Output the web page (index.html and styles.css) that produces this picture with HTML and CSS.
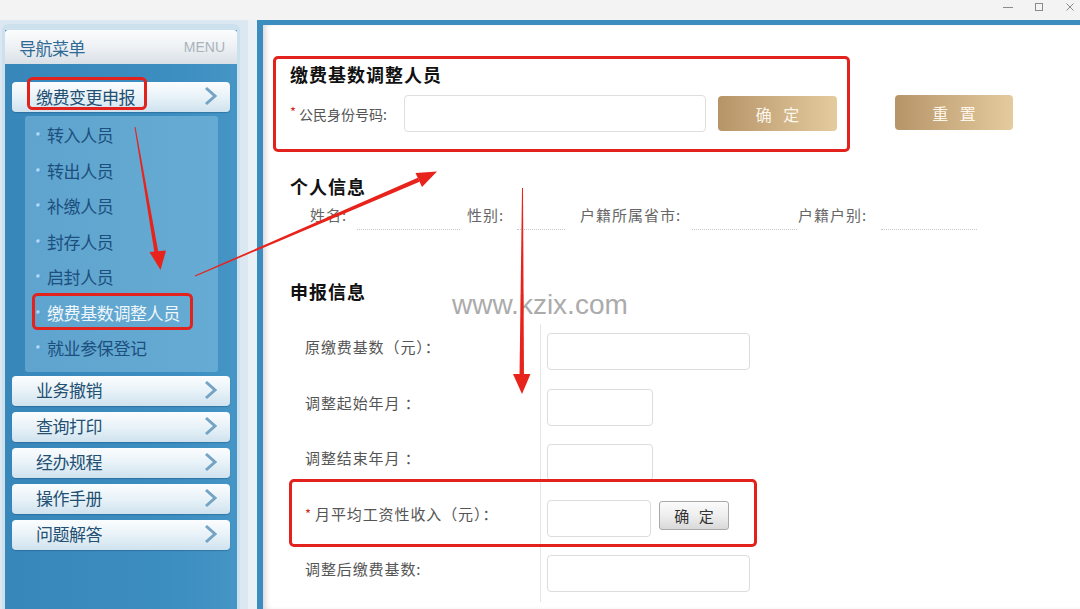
FILE: index.html
```html
<!DOCTYPE html>
<html lang="zh-CN">
<head>
<meta charset="utf-8">
<title>缴费基数调整人员</title>
<link rel="stylesheet" href="styles.css">
</head>
<body>
<div class="titlebar">
  <div class="winctl">
    <svg width="12" height="12" viewBox="0 0 12 12"><path d="M1 6.5h10" stroke="#8a8a8a" stroke-width="1"/></svg>
    <svg width="12" height="12" viewBox="0 0 12 12"><rect x="2.5" y="2.5" width="7" height="7" fill="none" stroke="#8a8a8a" stroke-width="1"/></svg>
    <svg width="12" height="12" viewBox="0 0 12 12"><path d="M2.5 2.5l7 7M9.5 2.5l-7 7" stroke="#8a8a8a" stroke-width="1"/></svg>
  </div>
</div>
<div class="app">
  <aside class="sidebar">
    <div class="nav">
      <div class="nav-head"><span class="nav-title">导航菜单</span><span class="nav-en">MENU</span></div>
      <div class="menu">
        <div class="menu-btn"><span>缴费变更申报</span><svg class="chev" width="14" height="20" viewBox="0 0 14 20"><path d="M2 2l9 8-9 8" fill="none" stroke="#74a3c3" stroke-width="3"/></svg></div>
        <ul class="submenu">
          <li><i class="dot"></i>转入人员</li>
          <li><i class="dot"></i>转出人员</li>
          <li><i class="dot"></i>补缴人员</li>
          <li><i class="dot"></i>封存人员</li>
          <li><i class="dot"></i>启封人员</li>
          <li class="active"><i class="dot"></i>缴费基数调整人员</li>
          <li><i class="dot"></i>就业参保登记</li>
        </ul>
        <div class="menu-btn"><span>业务撤销</span><svg class="chev" width="14" height="20" viewBox="0 0 14 20"><path d="M2 2l9 8-9 8" fill="none" stroke="#74a3c3" stroke-width="3"/></svg></div>
        <div class="menu-btn"><span>查询打印</span><svg class="chev" width="14" height="20" viewBox="0 0 14 20"><path d="M2 2l9 8-9 8" fill="none" stroke="#74a3c3" stroke-width="3"/></svg></div>
        <div class="menu-btn"><span>经办规程</span><svg class="chev" width="14" height="20" viewBox="0 0 14 20"><path d="M2 2l9 8-9 8" fill="none" stroke="#74a3c3" stroke-width="3"/></svg></div>
        <div class="menu-btn"><span>操作手册</span><svg class="chev" width="14" height="20" viewBox="0 0 14 20"><path d="M2 2l9 8-9 8" fill="none" stroke="#74a3c3" stroke-width="3"/></svg></div>
        <div class="menu-btn"><span>问题解答</span><svg class="chev" width="14" height="20" viewBox="0 0 14 20"><path d="M2 2l9 8-9 8" fill="none" stroke="#74a3c3" stroke-width="3"/></svg></div>
      </div>
    </div>
  </aside>
  <main class="main">
    <div class="search-row">
      <section class="search-box">
        <h2 class="sec-title">缴费基数调整人员</h2>
        <div class="search-line">
          <label class="search-label"><span class="req">*</span>公民身份号码:</label>
          <div class="id-input"></div>
          <button class="btn-gold">确 定</button>
        </div>
      </section>
      <button class="btn-gold reset">重 置</button>
    </div>

    <h2 class="sec-title indent">个人信息</h2>
    <div class="info-row">
      <span class="info-label l-name">姓名:</span><span class="info-field f-name"></span>
      <span class="info-label l-sex">性别:</span><span class="info-field f-sex"></span>
      <span class="info-label l-prov">户籍所属省市:</span><span class="info-field f-prov"></span>
      <span class="info-label l-type">户籍户别:</span><span class="info-field f-type"></span>
    </div>

    <h2 class="sec-title indent report">申报信息</h2>
    <div class="form">
      <div class="row"><div class="cell-label">原缴费基数（元）：</div><div class="cell-input"><div class="inp wide"></div></div></div>
      <div class="row"><div class="cell-label">调整起始年月 ：</div><div class="cell-input"><div class="inp"></div></div></div>
      <div class="row"><div class="cell-label">调整结束年月 ：</div><div class="cell-input"><div class="inp"></div></div></div>
      <div class="row marked"><div class="cell-label"><span class="req">*</span>月平均工资性收入（元）：</div><div class="cell-input"><div class="inp narrow"></div><button class="btn-gray">确 定</button></div></div>
      <div class="row"><div class="cell-label">调整后缴费基数:</div><div class="cell-input"><div class="inp wide"></div></div></div>
    </div>
  </main>
</div>

<div class="watermark">www.kzix.com</div>

<svg class="annot" width="1080" height="609" viewBox="0 0 1080 609">
  <g fill="none" stroke="#e2231d" stroke-width="3">
    <rect x="28.5" y="78.5" width="117" height="30" rx="4"/>
    <rect x="33.5" y="294.5" width="158" height="34" rx="4"/>
  </g>
  <g fill="#e8231c">
    <polygon points="134.5,127 135.5,127 158.5,253 154.5,253"/>
    <polygon points="149.5,252 166,250.5 160.5,270"/>
    <polygon points="194.8,275.5 195.2,276.5 419.6,181.7 417.8,177.8"/>
    <polygon points="415.5,173 422,187 437,171.5"/>
    <polygon points="522,188 523,188 524,377 519.5,377"/>
    <polygon points="513,374 530.5,374 522,394"/>
  </g>
</svg>
</body>
</html>
```
FILE: styles.css
```css
* { box-sizing: border-box; }
html, body { margin: 0; padding: 0; }
body {
  width: 1080px;
  height: 609px;
  overflow: hidden;
  position: relative;
  background: #e9f1f7;
  font-family: "Noto Sans CJK SC", "Liberation Sans", sans-serif;
}

.titlebar {
  height: 20px;
  background: #f3f3f3;
  display: flex;
  justify-content: flex-end;
  align-items: center;
}
.winctl { display: flex; gap: 19px; padding-right: 4px; margin-top: -6px; }
.winctl svg { display: block; }

.app {
  display: flex;
  height: 589px;
  gap: 9px;
}

/* ---------- sidebar ---------- */
.sidebar {
  width: 248px;
  flex: none;
  padding: 4px 8px 0 2px;
  background: #dbe8f1;
}
.nav {
  height: 100%;
  border: 3px solid #cde0ed;
  border-top-width: 6px;
  border-bottom: 0;
  border-radius: 6px 6px 0 0;
  background: linear-gradient(90deg, #3887bb 0%, #3c8dc0 70%, #4595c6 100%);
}
.nav-head {
  height: 34px;
  display: flex;
  align-items: center;
  justify-content: space-between;
  padding: 0 12px 0 14px;
  background: linear-gradient(#fbfcfd 0%, #eef1f4 50%, #d9e0e6 100%);
  border-radius: 3px 3px 0 0;
}
.nav-title { font-size: 17px; color: #2f6a95; letter-spacing: -0.5px; }
.nav-en { font-family: "Liberation Sans", sans-serif; font-size: 14px; color: #a9b3bb; }

.menu { padding: 18px 7px 0 7px; display: flex; flex-direction: column; gap: 6px; }
.menu-btn {
  height: 30px;
  border-radius: 4px;
  background: linear-gradient(#fbfdfe 0%, #e8f2f8 50%, #cfe2ee 100%);
  box-shadow: 0 1px 1px rgba(20, 70, 110, 0.35);
  display: flex;
  align-items: center;
  justify-content: space-between;
  padding: 0 12px 2px 24px;
  font-size: 17px;
  color: #234f72;
  letter-spacing: -0.5px;
}
.chev { display: block; }

.submenu {
  list-style: none;
  margin: -2px 0 -2px 13px;
  width: 193px;
  padding: 1px 0 6px 0;
  background: linear-gradient(90deg, #5ea4ce 0%, #66abd3 100%);
  border-radius: 3px;
}
.submenu li {
  height: 35.5px;
  display: flex;
  align-items: center;
  padding-left: 11px;
  font-size: 17px;
  color: #1c4f7d;
  letter-spacing: -0.4px;
}
.submenu li.active { color: #eef6fb; }
.dot {
  width: 5px;
  height: 5px;
  border-radius: 50%;
  background: radial-gradient(circle at 35% 35%, #d9eefc 0%, #5ea6dc 60%, #2f7fc0 100%);
  margin-right: 6px;
  flex: none;
}

/* ---------- main ---------- */
.main {
  flex: 1;
  background: #fff;
  border-top: 5px solid #3b8cbf;
  border-left: 6px solid #3b8cbf;
  box-shadow: inset 5px 0 6px -3px rgba(0, 0, 0, 0.18);
  padding: 0 0 0 10px;
}

.search-row { display: flex; align-items: flex-start; margin-top: 31px; }
.search-box {
  width: 577px;
  border: 3px solid #e2231d;
  border-radius: 5px;
  padding: 3px 10px 17px 14px;
}
.sec-title {
  margin: 0;
  height: 24px;
  line-height: 24px;
  font-size: 18px;
  font-weight: 700;
  letter-spacing: 1px;
  color: #111;
}
.search-line { display: flex; align-items: center; margin-top: 9px; height: 37px; }
.search-label { width: 114px; font-size: 14px; color: #555; }
.req { color: #d8261f; font-size: 13px; margin-right: 3px; position: relative; top: -3px; }
.id-input {
  width: 302px;
  height: 37px;
  border: 1px solid #dedede;
  border-radius: 4px;
  background: #fff;
}
.btn-gold {
  width: 119px;
  height: 35px;
  margin-left: 12px;
  border: 0;
  border-radius: 4px;
  background: linear-gradient(90deg, #b69467 0%, #cdb084 50%, #e4cb9d 100%);
  color: #fdf6ea;
  font-family: "Noto Sans CJK SC", sans-serif;
  font-size: 16px;
  letter-spacing: 4px;
  padding: 0 0 0 4px;
}
.btn-gold.reset { margin-left: 45px; margin-top: 39px; width: 118px; }

.indent { margin-left: 17px; }
.sec-title.indent { margin-top: 22px; }
.sec-title.report { margin-top: 49px; }

.info-row {
  margin: 4px 0 0 37px;
  height: 28px;
  display: flex;
  align-items: stretch;
}
.info-label {
  font-size: 15px;
  color: #666;
  line-height: 26px;
  letter-spacing: 1px;
  white-space: nowrap;
}
.info-field { border-bottom: 1px dotted #c8c8c8; }
.l-name { width: 47px; }
.f-name { width: 103px; }
.l-sex { width: 50px; margin-left: 7px; }
.f-sex { width: 48px; }
.l-prov { width: 112px; margin-left: 15px; }
.f-prov { width: 105px; }
.l-type { width: 83px; margin-left: 1px; }
.f-type { width: 96px; }

.form {
  margin: 21px 0 0 16px;
  width: 468px;
  background-image: linear-gradient(#e6e6e6, #e6e6e6);
  background-size: 1px 100%;
  background-position: 251px 0;
  background-repeat: no-repeat;
}
.row {
  height: 55.5px;
  display: flex;
  align-items: stretch;
  border: 3px solid transparent;
  border-radius: 5px;
}
.row.marked {
  height: 68px;
  margin: -11.5px 0 -1px;
  padding-top: 10px;
  border-color: #e2231d;
  position: relative;
}
.cell-label {
  width: 248px;
  padding: 0 0 10px 13px;
  display: flex;
  align-items: center;
  font-size: 15px;
  color: #555;
  letter-spacing: 0.9px;
  white-space: nowrap;
}
.row.marked .req { top: 0; margin-right: 3px; }
.cell-input {
  display: flex;
  align-items: center;
  padding-left: 7px;
  gap: 8px;
}
.inp {
  width: 106px;
  height: 37px;
  border: 1px solid #dcdcdc;
  border-radius: 4px;
  background: #fff;
}
.inp.wide { width: 203px; }
.inp.narrow { width: 104px; }
.btn-gray {
  width: 70px;
  height: 29px;
  margin-top: -5px;
  border: 1px solid #a9a9a9;
  border-radius: 3px;
  background: linear-gradient(#fbfbfb 0%, #eeeeee 50%, #d9d9d9 100%);
  font-family: "Noto Sans CJK SC", sans-serif;
  font-size: 15px;
  color: #333;
  letter-spacing: 3px;
  padding: 0 0 0 3px;
}

.watermark {
  position: absolute;
  left: 452px;
  top: 288px;
  font-family: "Liberation Sans", sans-serif;
  font-size: 28px;
  color: #ababab;
  line-height: 34px;
  pointer-events: none;
}
.annot { position: absolute; left: 0; top: 0; pointer-events: none; }
```
